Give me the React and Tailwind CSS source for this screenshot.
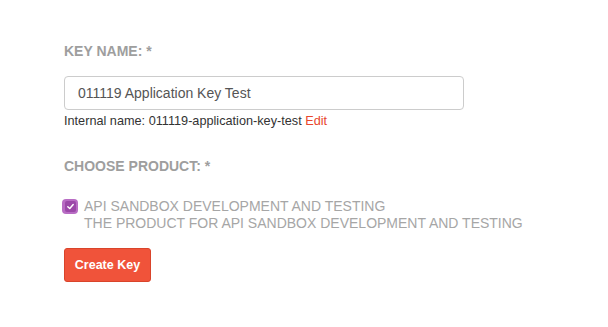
export default function App() {
  return (
    <div className="min-h-[327px] bg-white pl-16 pt-[43px] font-['Liberation_Sans',Arial,sans-serif]">
      <div className="text-[14px] font-bold uppercase leading-[16px] text-[#9e9e9e]">Key name: *</div>
      <input
        readOnly
        value="011119 Application Key Test"
        className="mt-[17px] block h-[34px] w-[400px] rounded-[4px] border border-[#cccccc] px-[13px] text-[14px] text-[#555555] outline-none"
      />
      <div className="mt-[2px] text-[12.7px] leading-[18px] text-[#333333]">
        Internal name: 011119-application-key-test <span className="text-[#e8472c]">Edit</span>
      </div>
      <div className="mt-[28px] text-[14px] font-bold uppercase leading-[16px] text-[#9e9e9e]">Choose product: *</div>
      <label className="mt-[24px] flex items-start gap-[6px]">
        <span className="ml-[-2px] mt-[1px] flex h-[15px] w-[16px] items-center justify-center rounded-[4px] bg-[#b86cc4]">
          <span className="flex h-[11px] w-[11px] items-center justify-center rounded-[2px] bg-[#9b48a8]">
            <svg width="9" height="9" viewBox="0 0 10 10" fill="none">
              <path d="M2 5.2 L4.2 7.3 L8 2.8" stroke="white" strokeWidth="1.6" strokeLinecap="round" strokeLinejoin="round" />
            </svg>
          </span>
        </span>
        <span className="text-[14px] leading-[17px] text-[#a6a6a6]">
          API SANDBOX DEVELOPMENT AND TESTING
          <br />
          THE PRODUCT FOR API SANDBOX DEVELOPMENT AND TESTING
        </span>
      </label>
      <button className="mt-[16px] block h-[34px] w-[87px] rounded-[3px] border border-[#d9442b] bg-[#f0533a] text-[12.5px] font-bold text-white">
        Create Key
      </button>
    </div>
  )
}
